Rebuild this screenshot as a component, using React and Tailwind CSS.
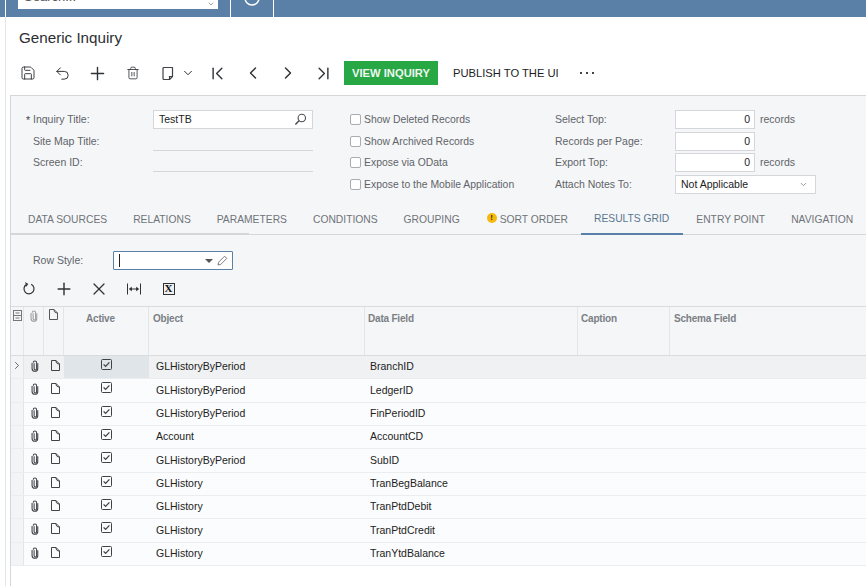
import { Save, Undo2, Plus, Trash2, ChevronDown, ChevronFirst, ChevronLast, ChevronLeft, ChevronRight, X } from 'lucide-react'

const TABS = [
  { label: 'DATA SOURCES' },
  { label: 'RELATIONS' },
  { label: 'PARAMETERS' },
  { label: 'CONDITIONS' },
  { label: 'GROUPING' },
  { label: 'SORT ORDER', warn: true },
  { label: 'RESULTS GRID', active: true },
  { label: 'ENTRY POINT' },
  { label: 'NAVIGATION' },
]

const ROWS = [
  ['GLHistoryByPeriod', 'BranchID'],
  ['GLHistoryByPeriod', 'LedgerID'],
  ['GLHistoryByPeriod', 'FinPeriodID'],
  ['Account', 'AccountCD'],
  ['GLHistoryByPeriod', 'SubID'],
  ['GLHistory', 'TranBegBalance'],
  ['GLHistory', 'TranPtdDebit'],
  ['GLHistory', 'TranPtdCredit'],
  ['GLHistory', 'TranYtdBalance'],
]

const GRID_COLS = 'grid grid-cols-[13px_20px_20px_85px_216px_213px_92px_1fr]'

function Clip({ className = '' }) {
  return (
    <svg width="8" height="12" viewBox="0 0 9 13" fill="none" stroke="currentColor" strokeWidth="1.2" className={className}>
      <path d="M3 3.5v6a1.4 1.4 0 0 0 2.8 0V2.8a1.9 1.9 0 0 0-3.8 0" transform="translate(0.5 0)" />
      <path d="M1.2 3v6.3a3.2 3.2 0 0 0 6.4 0V3.5" />
    </svg>
  )
}

function Doc({ size = 11, className = '' }) {
  return (
    <svg width={size} height={size + 2} viewBox="0 0 11 13" fill="none" stroke="currentColor" strokeWidth="1" className={className}>
      <path d="M1.5 1.5v10h8V5L6 1.5z" strokeLinejoin="round" />
      <path d="M6 1.5c0 2.5 1 3.5 3.5 3.5" />
    </svg>
  )
}

function Check() {
  return (
    <svg width="11" height="11" viewBox="0 0 11 11" fill="none" stroke="#3f4347">
      <rect x="0.5" y="0.5" width="10" height="10" rx="1" />
      <path d="M2.6 5.4l2 2 3.8-4" strokeWidth="1.3" />
    </svg>
  )
}

function Paste() {
  return (
    <svg width="14" height="16" viewBox="0 0 14 16" fill="none" stroke="#3f4347" strokeWidth="1.2">
      <path d="M3 2.5h8.5v9L8.5 14.5H3a1 1 0 0 1-1-1v-10a1 1 0 0 1 1-1z" strokeLinejoin="round" />
      <path d="M8.5 14.5v-3h3" />
    </svg>
  )
}

function Search() {
  return (
    <svg width="13" height="13" viewBox="0 0 13 13" fill="none" stroke="#4a4e52" strokeWidth="1.1">
      <circle cx="7.8" cy="5" r="3.7" />
      <path d="M5 7.8l-3.6 3.7" strokeWidth="1.5" />
    </svg>
  )
}

function FitCols() {
  return (
    <svg width="14" height="12" viewBox="0 0 14 12" fill="none" stroke="#2f3236">
      <path d="M0.5 0.5v11M13.5 0.5v11M2.5 6h9" />
      <path d="M4.4 4.4L2.6 6l1.8 1.6zM9.6 4.4L11.4 6 9.6 7.6z" fill="#2f3236" />
    </svg>
  )
}

function Refresh() {
  return (
    <svg width="14" height="14" viewBox="0 0 14 14" fill="none" stroke="#2f3236" strokeWidth="1.2">
      <path d="M4.6 2.4a5 5 0 1 0 4.6-.1" />
      <path d="M3.2 0.6l2.3 1.6-1.7 2.2" strokeWidth="1.1" />
    </svg>
  )
}

function Pencil() {
  return (
    <svg width="11" height="11" viewBox="0 0 11 11" fill="none" stroke="#6b7075" strokeWidth="0.9">
      <path d="M1 10l.6-2.8 6-6 2.2 2.2-6 6z" strokeLinejoin="round" />
    </svg>
  )
}

function Box({ children, className = '' }) {
  return <div className={`h-[19px] bg-white border border-[#d4d6d9] flex items-center ${className}`}>{children}</div>
}

function Field({ label, star, children }) {
  return (
    <div className="flex items-start">
      <div className="w-[127px] pl-[7px] relative text-[#5f6468] pt-[2px]">
        {star && <span className="absolute left-0 top-[3px] text-[#3f4347]">*</span>}
        {label}
      </div>
      {children}
    </div>
  )
}

function CheckField({ label }) {
  return (
    <div className="flex items-center gap-[3px] h-[19px] text-[#5f6468]">
      <span className="w-[11px] h-[11px] bg-white border border-[#a9adb1] rounded-[2px]" />
      {label}
    </div>
  )
}

function Num({ label, suffix }) {
  return (
    <div className="flex items-start">
      <div className="w-[120px] text-[#5f6468] pt-[2px]">{label}</div>
      <Box className="w-[80px] justify-end pr-[4px] text-[#222]">0</Box>
      {suffix && <span className="ml-[5px] text-[#5f6468] pt-[2px]">{suffix}</span>}
    </div>
  )
}

export default function App() {
  return (
    <div className="w-[866px] h-[586px] overflow-hidden bg-white flex flex-col font-['Liberation_Sans',Arial,sans-serif] text-[10.5px]">
      {/* top nav, cut off by the screenshot */}
      <div className="h-[17px] shrink-0 bg-[#5a80a7] flex">
        <div className="w-[5px] border-r border-white box-content" />
        <div className="ml-[12px] w-[200px] h-[9px] bg-white overflow-hidden flex justify-between pl-[6px] pr-[3px]">
          <span className="text-[13px] leading-[13px] -mt-[10px] text-[#555]">Search...</span>
          <ChevronDown size={8} className="text-[#777]" />
        </div>
        <div className="ml-[12px] w-[42px] h-[17px] border-x border-white box-content overflow-hidden flex justify-center">
          <svg width="18" height="8" viewBox="0 0 18 8" fill="none" stroke="white" strokeWidth="1.5">
            <circle cx="9" cy="-2" r="7" />
          </svg>
        </div>
      </div>

      <div className="flex-1 min-h-0 ml-[5px] border-l border-[#e3e5e7] flex flex-col">
        <div className="h-[44px] shrink-0 pl-[13px] pt-[11px] text-[15.2px] leading-[20px] text-[#2b2e31]">Generic Inquiry</div>

        {/* main toolbar */}
        <div className="h-[24px] shrink-0 flex items-center text-[#2f3236] pl-[4px]">
          <span className="w-[35px] flex justify-center"><Save size={16} strokeWidth={1.4} /></span>
          <span className="w-[35px] flex justify-center"><Undo2 size={17} strokeWidth={1.4} /></span>
          <span className="w-[35px] flex justify-center"><Plus size={21} strokeWidth={1.6} /></span>
          <span className="w-[35px] flex justify-center"><Trash2 size={14} strokeWidth={1.4} /></span>
          <span className="w-[35px] flex justify-center"><Paste /></span>
          <span className="w-[14px] flex justify-start -ml-[4px]"><ChevronDown size={14} strokeWidth={1.7} /></span>
          <span className="w-[35px] flex justify-center ml-[5px]"><ChevronFirst size={21} strokeWidth={1.6} /></span>
          <span className="w-[35px] flex justify-center"><ChevronLeft size={20} strokeWidth={1.7} /></span>
          <span className="w-[36px] flex justify-center"><ChevronRight size={20} strokeWidth={1.7} /></span>
          <span className="w-[34px] flex justify-center"><ChevronLast size={21} strokeWidth={1.6} /></span>
          <button className="ml-[4px] w-[94px] h-[24px] bg-[#28a745] text-[#eef8f0] text-[11.2px] font-bold">VIEW INQUIRY</button>
          <span className="ml-[15px] text-[11.2px] text-[#1b1d1f]">PUBLISH TO THE UI</span>
          <span className="ml-[21px] flex gap-[4px]">
            <i className="w-[2px] h-[2px] bg-[#444]" />
            <i className="w-[2px] h-[2px] bg-[#444]" />
            <i className="w-[2px] h-[2px] bg-[#444]" />
          </span>
        </div>

        <div className="h-[10px] shrink-0" />

        {/* form panel */}
        <div className="flex-1 min-h-0 ml-[4px] border-l border-t border-[#d4d6d9] bg-[#f5f6f8] flex flex-col">
          <div className="flex h-[109px] shrink-0 pt-[14px] pl-[15px]">
            <div className="w-[324px] grid grid-rows-[22px_21px_22px_19px]">
              <Field label="Inquiry Title:" star>
                <Box className="w-[160px] px-[5px] justify-between text-[#222]">
                  TestTB
                  <Search />
                </Box>
              </Field>
              <Field label="Site Map Title:"><div className="w-[160px] h-[19px] border-b border-[#d4d6d9]" /></Field>
              <Field label="Screen ID:"><div className="w-[160px] h-[19px] border-b border-[#d4d6d9]" /></Field>
            </div>
            <div className="w-[205px] grid grid-rows-[22px_21px_22px_19px] text-[10.4px]">
              <CheckField label="Show Deleted Records" />
              <CheckField label="Show Archived Records" />
              <CheckField label="Expose via OData" />
              <CheckField label="Expose to the Mobile Application" />
            </div>
            <div className="grid grid-rows-[22px_21px_22px_19px]">
              <Num label="Select Top:" suffix="records" />
              <Num label="Records per Page:" />
              <Num label="Export Top:" suffix="records" />
              <div className="flex items-start">
                <div className="w-[120px] text-[#5f6468] pt-[2px]">Attach Notes To:</div>
                <Box className="w-[141px] pl-[5px] pr-[7px] justify-between text-[#222]">
                  Not Applicable
                  <ChevronDown size={9} className="text-[#777]" />
                </Box>
              </div>
            </div>
          </div>

          {/* tabs */}
          <div className="relative h-[29px] shrink-0 flex border-b border-[#d4d6d9] pl-[4px] box-content text-[#6f7478] text-[10.3px]">
            <div className="absolute left-0 -bottom-[1px] w-[238px] h-[2px] bg-[#d4d6d9]" />
            {TABS.map(t => (
              <div
                key={t.label}
                className={`relative shrink-0 whitespace-nowrap h-[30px] flex items-center ${t.warn ? 'pl-[27px]' : 'pl-[13px]'} ${t.active ? 'pr-[14px] border-b-2 border-[#5a80a7] text-[#5a7690]' : 'pr-[13px]'}`}
              >
                {t.warn && <span className="absolute left-[14px] top-[8px] w-[10px] h-[10px] rounded-full bg-[#f5b90f] text-[#3a3000] text-[8px] leading-[10px] text-center font-bold">!</span>}
                {t.label}
              </div>
            ))}
          </div>

          {/* row style */}
          <div className="h-[35px] shrink-0 flex items-start pl-[22px] pt-[16px]">
            <span className="w-[80px] pt-[2px] text-[#5f6468]">Row Style:</span>
            <div className="w-[120px] h-[19px] bg-white border border-[#5a80a7] rounded-[1px] flex items-center pl-[5px] pr-[4px]">
              <span className="w-[1px] h-[13px] bg-[#222]" />
              <span className="ml-auto mr-[4px] border-x-[4px] border-t-[4px] border-x-transparent border-t-[#555]" />
              <Pencil />
            </div>
          </div>

          {/* grid toolbar */}
          <div className="h-[36px] shrink-0 flex items-center pt-[1px] text-[#2f3236]">
            <span className="w-[35px] flex justify-center"><Refresh /></span>
            <span className="w-[35px] flex justify-center"><Plus size={20} strokeWidth={1.7} /></span>
            <span className="w-[35px] flex justify-center"><X size={20} strokeWidth={1.5} /></span>
            <span className="w-[35px] flex justify-center"><FitCols /></span>
            <span className="w-[35px] flex justify-center">
              <span className="w-[12px] h-[12px] border border-[#2f3236] bg-[#eef0f2] flex items-center justify-center font-['Liberation_Serif',serif] text-[11px] leading-none font-bold text-[#111]">X</span>
            </span>
          </div>

          {/* grid header */}
          <div className={`${GRID_COLS} h-[50px] shrink-0 border-y border-[#d9dbde] text-[#7b8085] font-bold text-[10px] tracking-[-0.2px]`}>
            <div className="border-r border-[#e3e5e7] pt-[3px] flex justify-center">
              <svg width="9" height="11" viewBox="0 0 9 11" fill="none" stroke="#777">
                <rect x="0.5" y="0.5" width="8" height="10" />
                <path d="M0.5 5.5h8M2.5 3h4M2.5 8h4" />
              </svg>
            </div>
            <div className="border-r border-[#e3e5e7] pt-[3px] flex justify-center text-[#9a9ea2]"><Clip /></div>
            <div className="border-r border-[#e3e5e7] pt-[1px] flex justify-center text-[#555]"><Doc /></div>
            <div className="border-r border-[#e3e5e7] pt-[4px] pl-[22px]">Active</div>
            <div className="border-r border-[#e3e5e7] pt-[4px] pl-[4px]">Object</div>
            <div className="border-r border-[#e3e5e7] pt-[4px] pl-[3px]">Data Field</div>
            <div className="border-r border-[#e3e5e7] pt-[4px] pl-[3px]">Caption</div>
            <div className="pt-[4px] pl-[4px]">Schema Field</div>
          </div>

          {/* grid rows */}
          {ROWS.map(([obj, field], i) => (
            <div
              key={i}
              className={`${GRID_COLS} h-[23.33px] shrink-0 border-b border-[#ebedef] text-[#222] ${i === 0 ? 'bg-[#eff1f3]' : 'bg-[#fbfcfd]'}`}
            >
              <div className="bg-[#f3f4f6] border-r border-[#e3e5e7] flex justify-center pt-[3px]">
                {i === 0 && <ChevronRight size={13} strokeWidth={1.6} className="text-[#444]" />}
              </div>
              <div className="flex justify-center pt-[4px] pl-[1px] text-[#3f4347]"><Clip /></div>
              <div className="flex justify-center pt-[3px] pl-[3px] text-[#3f4347]"><Doc /></div>
              <div className={`flex justify-center pt-[3px] ${i === 0 ? 'bg-[#e0e5ea]' : ''}`}><Check /></div>
              <div className="pl-[7px] flex items-center">{obj}</div>
              <div className="pl-[5px] flex items-center">{field}</div>
              <div />
              <div />
            </div>
          ))}
          <div className="flex-1 bg-white" />
        </div>
      </div>
    </div>
  )
}
